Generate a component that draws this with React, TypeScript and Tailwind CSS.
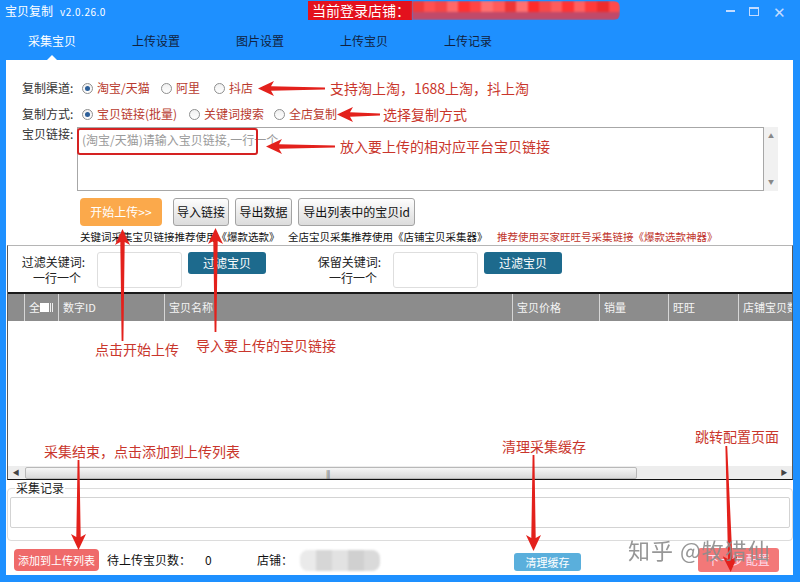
// 宝贝复制 — 采集宝贝 tab, with the red tutorial annotations drawn on top
import React from 'react';

type Dir = 'left' | 'up' | 'down';

// tapered red arrow; len along the shaft, head at the pointing end
function Arrow({ len, dir, className }: { len: number; dir: Dir; className: string }) {
  const t = 15; // thickness of head
  const h = 16; // head length
  const pts: [number, number][] = [
    [0, t / 2], [h, 0], [h - 3, t / 2 - 2.2], [len, t / 2 - 0.9], [len, t / 2 + 0.9], [h - 3, t / 2 + 2.2], [h, t],
  ];
  let mapped = pts;
  let w = len, hh = t;
  if (dir === 'up') { mapped = pts.map(([a, b]) => [b, a]); w = t; hh = len; }
  if (dir === 'down') { mapped = pts.map(([a, b]) => [b, len - a]); w = t; hh = len; }
  return (
    <svg width={w} height={hh} viewBox={`0 0 ${w} ${hh}`} className={className}>
      <polygon points={mapped.map((p) => p.join(',')).join(' ')} fill="#e3211c" />
    </svg>
  );
}

function Radio({ checked, label, className }: { checked?: boolean; label: string; className: string }) {
  return (
    <div className={`flex items-center ${className}`}>
      <span className="flex h-[11px] w-[11px] items-center justify-center rounded-full border border-[#8e8f8f] bg-gradient-to-b from-[#f0f0f0] to-[#ffffff]">
        {checked && <span className="h-[5px] w-[5px] rounded-full bg-[#2d5f99]" />}
      </span>
      <span className="ml-[4px] text-[12px] leading-[16px] text-[#b83a2e]">{label}</span>
    </div>
  );
}

function GrayBtn({ label, className }: { label: string; className: string }) {
  return (
    <div className={`flex h-[28px] items-center justify-center rounded-[3px] border border-[#a3a3a3] bg-gradient-to-b from-[#fdfdfd] to-[#dcdcdc] text-[12px] text-[#111] ${className}`}>
      {label}
    </div>
  );
}

const cols = [
  { w: 'w-[17px]', t: '' },
  { w: 'w-[34px]', t: 'sel' },
  { w: 'w-[106px]', t: '数字ID' },
  { w: 'w-[348px]', t: '宝贝名称' },
  { w: 'w-[87px]', t: '宝贝价格' },
  { w: 'w-[69px]', t: '销量' },
  { w: 'w-[70px]', t: '旺旺' },
  { w: 'w-[60px]', t: '店铺宝贝数' },
];

const mosaic = ['#f23a3a', '#ff5050', '#f64545', '#ff6868', '#ff3030', '#f44', '#ff6f6f', '#ff5a5a', '#ee3535', '#ff7070', '#ff2a2a', '#f74848', '#ff5c5c', '#f33', '#ff6060', '#ff3a3a', '#ee2c2c', '#ff4a4a'];

export default function App() {
  return (
    <div className="relative h-[582px] w-[800px] overflow-hidden bg-[#1e90ff] font-['Noto_Sans_CJK_SC',sans-serif] text-[12px]">
      {/* title bar */}
      <div className="flex h-[22px] items-center">
        <div className="flex w-[308px] items-center pl-[5px] text-white">
          <span className="text-[12px]">宝贝复制</span>
          <span className="ml-[7px] text-[10px] tracking-[0.5px]">v2.0.26.0</span>
        </div>
        <div className="flex h-[19px] w-[312px] items-stretch self-start mt-[1px] overflow-hidden rounded-r-[6px]">
          <div className="flex items-center bg-[#e3111d] pl-[4px] pr-[2px] text-[14px] text-white">当前登录店铺：</div>
          <div className="flex flex-1 flex-col blur-[1px]">
            <div className="flex h-[11px]">
              {mosaic.map((c, i) => (
                <span key={i} className="h-full flex-1" style={{ background: c }} />
              ))}
            </div>
            <div className="h-[8px] bg-[#c04a6a]" />
          </div>
        </div>
        <div className="ml-auto mr-[14px] flex items-center gap-[14px] text-[#c4dcff]">
          <span className="h-[2px] w-[9px] bg-[#c4dcff]" />
          <span className="h-[9px] w-[10px] border border-[#c4dcff] border-t-[2px]" />
          <span className="text-[15px] leading-none">✕</span>
        </div>
      </div>

      {/* tabs */}
      <div className="flex h-[38px] items-center text-[12px] text-[#112240]">
        <div className="relative flex h-full w-[104px] items-center justify-center text-white">
          采集宝贝
          <span className="absolute bottom-0 left-[47px] h-0 w-0 border-x-[5px] border-b-[5px] border-x-transparent border-b-white" />
        </div>
        <div className="flex w-[104px] justify-center">上传设置</div>
        <div className="flex w-[104px] justify-center">图片设置</div>
        <div className="flex w-[104px] justify-center">上传宝贝</div>
        <div className="flex w-[104px] justify-center">上传记录</div>
      </div>

      {/* main panel */}
      <div className="ml-[6px] flex h-[515px] w-[787px] flex-col bg-white text-[#222]">
        {/* 复制渠道 */}
        <div className="mt-[20px] flex h-[16px] items-center pl-[16px]">
          <span className="w-[60px] text-[#333]">复制渠道:</span>
          <Radio checked label="淘宝/天猫" className="w-[79px]" />
          <Radio label="阿里" className="w-[53px]" />
          <Radio label="抖店" className="w-[44px]" />
          <Arrow len={67} dir="left" className="shrink-0" />
          <span className="ml-[5px] text-[14px] leading-[16px] text-[#c9362c]">支持淘上淘，1688上淘，抖上淘</span>
        </div>

        {/* 复制方式 */}
        <div className="mt-[10px] flex h-[16px] items-center pl-[16px]">
          <span className="w-[60px] text-[#333]">复制方式:</span>
          <Radio checked label="宝贝链接(批量)" className="w-[107px]" />
          <Radio label="关键词搜索" className="w-[85px]" />
          <Radio label="全店复制" className="w-[63px]" />
          <Arrow len={43} dir="left" className="shrink-0" />
          <span className="ml-[3px] text-[14px] leading-[16px] text-[#c9362c]">选择复制方式</span>
        </div>

        {/* 宝贝链接 */}
        <div className="mt-[5px] flex h-[64px] pl-[16px]">
          <span className="w-[55px] pt-[1px] leading-[12px] text-[#333]">宝贝链接:</span>
          <div className="flex w-[701px]">
            <div className="w-[687px] border border-[#a7a7a7] pl-[4px] pt-[3px] text-[12px] text-[#9a9a9a]">
              (淘宝/天猫)请输入宝贝链接,一行一个
            </div>
            <div className="flex w-[14px] flex-col items-center justify-between bg-[#f1f1f1] py-[6px] text-[6px] leading-none text-[#888]">
              <span>▲</span>
              <span>▼</span>
            </div>
          </div>
        </div>

        {/* buttons */}
        <div className="mt-[7px] flex h-[28px] pl-[74px]">
          <div className="flex h-[28px] w-[82px] items-center justify-center rounded-[4px] bg-[#fba94b] text-[12px] text-white">开始上传&gt;&gt;</div>
          <GrayBtn label="导入链接" className="ml-[11px] w-[56px]" />
          <GrayBtn label="导出数据" className="ml-[6px] w-[57px]" />
          <GrayBtn label="导出列表中的宝贝id" className="ml-[6px] w-[117px]" />
        </div>

        {/* hints */}
        <div className="mt-[5px] flex h-[12px] pl-[74px] text-[10.5px] leading-[12px] text-[#111]">
          <span className="w-[208px] whitespace-nowrap">关键词采集宝贝链接推荐使用《爆款选款》</span>
          <span className="w-[209px] whitespace-nowrap">全店宝贝采集推荐使用《店铺宝贝采集器》</span>
          <span className="whitespace-nowrap text-[#c0332b]">推荐使用买家旺旺号采集链接《爆款选款神器》</span>
        </div>

        {/* filter + table box */}
        <div className="mt-[2px] ml-[1px] flex h-[235px] w-[786px] flex-col border border-t-[#b5b5b5] border-x-[#5a5a5a] border-b-[#111]">
          <div className="flex h-[46px]">
            <div className="flex w-[77px] flex-col items-end pt-[8px] text-[12px] leading-[16px] text-[#222]">
              <span>过滤关键词:</span>
              <span className="pr-[4px]">一行一个</span>
            </div>
            <div className="ml-[12px] mt-[6px] h-[36px] w-[85px] rounded-[3px] border border-[#dedede]" />
            <div className="ml-[6px] mt-[6px] flex h-[22px] w-[78px] items-center justify-center rounded-[3px] bg-[#1d6a8d] text-white">过滤宝贝</div>
            <div className="flex w-[115px] flex-col items-end pt-[8px] text-[12px] leading-[16px] text-[#222]">
              <span>保留关键词:</span>
              <span className="pr-[4px]">一行一个</span>
            </div>
            <div className="ml-[12px] mt-[6px] h-[36px] w-[85px] rounded-[3px] border border-[#dedede]" />
            <div className="ml-[6px] mt-[6px] flex h-[22px] w-[78px] items-center justify-center rounded-[3px] bg-[#1d6a8d] text-white">过滤宝贝</div>
          </div>

          <div className="h-[2px] bg-[#1a1a1a]" />
          <div className="flex h-[27px] overflow-hidden bg-[#8c8c8c] text-[11px] text-[#f4f4f4]">
            {cols.map((c, i) => (
              <div key={i} className={`flex shrink-0 items-center overflow-hidden border-r border-[#d6d6d6] pl-[4px] whitespace-nowrap ${c.w}`}>
                {c.t === 'sel' ? (
                  <span className="flex items-center">
                    全<span className="h-[9px] w-[9px] bg-white" />
                    <span className="ml-[1px] h-[9px] w-[3px] border-x border-[#eee]" />
                  </span>
                ) : (
                  c.t
                )}
              </div>
            ))}
          </div>
          <div className="flex-1 bg-white" />
          <div className="flex h-[13px] items-center bg-[#ededed]">
            <span className="w-[16px] text-center text-[7px] text-[#444]">◀</span>
            <div className="relative ml-[1px] h-[12px] w-[612px] rounded-[2px] border border-[#b8b8b8] bg-gradient-to-b from-[#f6f6f6] to-[#d9d9d9]">
              <span className="absolute left-[300px] top-[1px] text-[8px] leading-[9px] tracking-[-1px] text-[#666]">|||</span>
            </div>
            <span className="ml-auto mr-[3px] w-[10px] text-center text-[7px] text-[#444]">▶</span>
          </div>
        </div>

        {/* 采集记录 */}
        <fieldset className="mt-[1px] ml-[1px] h-[60px] w-[786px] rounded-[4px] border border-[#dcdcdc] px-[2px]">
          <legend className="ml-[5px] px-[1px] text-[12px] leading-[14px] text-[#222]">采集记录</legend>
          <div className="mt-[2px] h-[31px] rounded-[2px] border border-[#d3d3d3]" />
        </fieldset>

        {/* bottom row */}
        <div className="mt-[7px] flex h-[24px] items-center pl-[8px]">
          <div className="flex h-[22px] w-[85px] items-center justify-center rounded-[4px] bg-[#ef6a6a] text-[11px] text-white">添加到上传列表</div>
          <span className="ml-[8px] w-[98px] text-[12px] text-[#111]">待上传宝贝数：</span>
          <span className="w-[52px] text-[12px] text-[#111]">0</span>
          <span className="w-[43px] text-[12px] text-[#111]">店铺：</span>
          <div className="flex h-[21px] w-[80px] overflow-hidden rounded-[8px] blur-[1px]">
            <span className="w-[16px] bg-[#eaeaea]" />
            <span className="w-[16px] bg-[#d6d6d6]" />
            <span className="w-[16px] bg-[#e2e2e2]" />
            <span className="w-[16px] bg-[#d0d0d0]" />
            <span className="w-[16px] bg-[#dadada]" />
          </div>
          <div className="ml-[134px] mt-[4px] flex h-[18px] w-[67px] items-center justify-center rounded-[3px] bg-[#5aafdc] text-[11px] text-white">清理缓存</div>
          <div className="ml-[117px] flex h-[24px] w-[81px] items-center justify-center rounded-[3px] bg-[#f37878] text-[12px] text-[#fde]">下一步 配置</div>
        </div>
      </div>

      {/* annotations */}
      <div className="absolute left-[77px] top-[128px] h-[27px] w-[181px] rounded-[3px] border-2 border-[#d52222]" />
      <Arrow len={69} dir="left" className="absolute left-[266px] top-[139px]" />
      <span className="absolute left-[340px] top-[137px] text-[14px] leading-[18px] text-[#c9362c]">放入要上传的相对应平台宝贝链接</span>

      <Arrow len={112} dir="up" className="absolute left-[115px] top-[229px]" />
      <span className="absolute left-[95px] top-[340px] text-[14px] leading-[18px] text-[#c9362c]">点击开始上传</span>
      <Arrow len={104} dir="up" className="absolute left-[208px] top-[228px]" />
      <span className="absolute left-[196px] top-[336px] text-[14px] leading-[18px] text-[#c9362c]">导入要上传的宝贝链接</span>

      <span className="absolute left-[44px] top-[442px] text-[14px] leading-[18px] text-[#c9362c]">采集结束，点击添加到上传列表</span>
      <Arrow len={90} dir="down" className="absolute left-[71px] top-[460px]" />
      <span className="absolute left-[502px] top-[437px] text-[14px] leading-[18px] text-[#c9362c]">清理采集缓存</span>
      <Arrow len={96} dir="down" className="absolute left-[526px] top-[455px]" />
      <span className="absolute left-[695px] top-[427px] text-[14px] leading-[18px] text-[#c9362c]">跳转配置页面</span>
      <Arrow len={126} dir="down" className="absolute left-[721px] top-[446px] rotate-[-2deg]" />

      <span className="absolute left-[628px] top-[534px] text-[22px] leading-[30px] tracking-[1px] text-[#8c8c8c] opacity-90">知乎 @牧猎仙</span>
    </div>
  );
}
